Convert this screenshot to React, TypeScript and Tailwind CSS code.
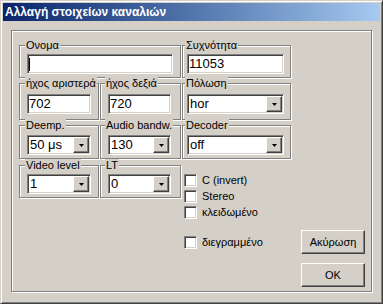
import React from "react";

const sunken =
  "border border-t-[#808080] border-l-[#808080] border-b-white border-r-white shadow-[inset_1px_1px_0_#404040,inset_-1px_-1px_0_#d4d0c8]";
const raised =
  "border border-t-white border-l-white border-b-[#404040] border-r-[#404040] shadow-[inset_-1px_-1px_0_#808080]";

function Group({
  label,
  className,
  labelClass,
  children,
}: {
  label: string;
  className: string;
  labelClass: string;
  children?: React.ReactNode;
}) {
  return (
    <div
      className={`relative border border-[#808080] shadow-[inset_1px_1px_0_#fff,1px_1px_0_#fff] ${className}`}
    >
      <span
        className={`absolute -top-[7px] bg-[#d4d0c8] px-[1px] text-[11px] leading-[13px] whitespace-nowrap ${labelClass}`}
      >
        {label}
      </span>
      {children}
    </div>
  );
}

function TextBox({ value, className, caret }: { value?: string; className: string; caret?: boolean }) {
  return (
    <div className={`h-[20px] bg-white flex items-center text-[13px] leading-[16px] ${sunken} ${className}`}>
      {caret && <span className="ml-[1px] w-[1px] h-[13px] bg-black" />}
      <span className="pl-[1px]">{value}</span>
    </div>
  );
}

function Select({ value, className }: { value: string; className: string }) {
  return (
    <div className={`h-[20px] bg-white flex items-center justify-between text-[13px] leading-[16px] ${sunken} ${className}`}>
      <span className="pl-[2px]">{value}</span>
      <div className={`w-[16px] h-[16px] mr-[1px] bg-[#d4d0c8] flex items-center justify-center ${raised}`}>
        <svg width="5" height="3" viewBox="0 0 5 3">
          <polygon points="0,0 5,0 2.5,3" fill="#000" />
        </svg>
      </div>
    </div>
  );
}

function Check({ label, className }: { label: string; className?: string }) {
  return (
    <div className={`flex items-center ${className ?? ""}`}>
      <span className={`w-[13px] h-[13px] bg-white ${sunken}`} />
      <span className="ml-[5px] text-[11px] leading-[13px]">{label}</span>
    </div>
  );
}

function Button({ children }: { children: React.ReactNode }) {
  return (
    <div
      className={`w-[64px] h-[24px] bg-[#d4d0c8] flex items-center justify-center text-[11px] leading-[13px] ${raised}`}
    >
      {children}
    </div>
  );
}

export default function App() {
  return (
    <div className="w-[383px] h-[304px] bg-[#d4d0c8] text-black font-['Liberation_Sans',Arial,sans-serif] border border-t-[#d4d0c8] border-l-[#d4d0c8] border-b-[#404040] border-r-[#404040] shadow-[inset_1px_1px_0_#fff,inset_-1px_-1px_0_#808080] p-[2px] flex flex-col">
      {/* title bar */}
      <div className="h-[18px] bg-gradient-to-r from-[#0a246a] to-[#a6caf0] flex items-center pl-[2px]">
        <span className="text-white font-bold text-[12px] leading-[14px]">Αλλαγή στοιχείων καναλιών</span>
      </div>

      {/* main panel */}
      <div className="mt-[9px] mx-[8px] h-[262px] border border-[#808080] shadow-[inset_1px_1px_0_#fff,1px_1px_0_#fff] pl-[7px] pt-[14px] pr-[6px] flex gap-[1px]">
        {/* left columns */}
        <div className="w-[162px] flex flex-col">
          <Group label="Ονομα" className="h-[33px]" labelClass="left-[5px]">
            <TextBox caret className="w-[146px] ml-[7px] mt-[8px]" />
          </Group>
          <div className="mt-[5px] flex gap-[1px]">
            <Group label="ήχος αριστερά" className="w-[80px] h-[37px]" labelClass="left-[5px]">
              <TextBox value="702" className="w-[64px] ml-[7px] mt-[10px]" />
            </Group>
            <Group label="ήχος δεξιά" className="w-[81px] h-[37px]" labelClass="left-[4px]">
              <TextBox value="720" className="w-[63px] ml-[7px] mt-[10px]" />
            </Group>
          </div>
          <div className="mt-[5px] flex gap-[1px]">
            <Group label="Deemp." className="w-[80px] h-[34px]" labelClass="left-[5px]">
              <Select value="50 μs" className="w-[64px] ml-[7px] mt-[9px]" />
            </Group>
            <Group label="Audio bandw." className="w-[81px] h-[34px]" labelClass="left-[4px]">
              <Select value="130" className="w-[63px] ml-[7px] mt-[9px]" />
            </Group>
          </div>
          <div className="mt-[6px] flex gap-[1px]">
            <Group label="Video level" className="w-[80px] h-[33px]" labelClass="left-[5px]">
              <Select value="1" className="w-[64px] ml-[7px] mt-[8px]" />
            </Group>
            <Group label="LT" className="w-[81px] h-[33px]" labelClass="left-[4px]">
              <Select value="0" className="w-[63px] ml-[7px] mt-[8px]" />
            </Group>
          </div>
        </div>

        {/* right column */}
        <div className="flex-1 flex flex-col">
          <Group label="Συχνότητα" className="w-[109px] h-[33px]" labelClass="left-[2px]">
            <TextBox value="11053" className="w-[97px] ml-[4px] mt-[8px]" />
          </Group>
          <Group label="Πόλωση" className="mt-[5px] w-[109px] h-[37px]" labelClass="left-[2px]">
            <Select value="hor" className="w-[97px] ml-[4px] mt-[10px]" />
          </Group>
          <Group label="Decoder" className="mt-[5px] w-[109px] h-[34px]" labelClass="left-[2px]">
            <Select value="off" className="w-[97px] ml-[4px] mt-[9px]" />
          </Group>

          <div className="mt-[13px] ml-[2px] flex flex-col">
            <Check label="C (invert)" className="h-[16px]" />
            <Check label="Stereo" className="h-[16px]" />
            <Check label="κλειδωμένο" className="h-[16px]" />
          </div>

          <div className="mt-[10px] ml-[2px] flex items-center justify-between">
            <Check label="διεγραμμένο" />
            <Button>Ακύρωση</Button>
          </div>
          <div className="mt-[9px] flex justify-end">
            <Button>OK</Button>
          </div>
        </div>
      </div>
    </div>
  );
}
